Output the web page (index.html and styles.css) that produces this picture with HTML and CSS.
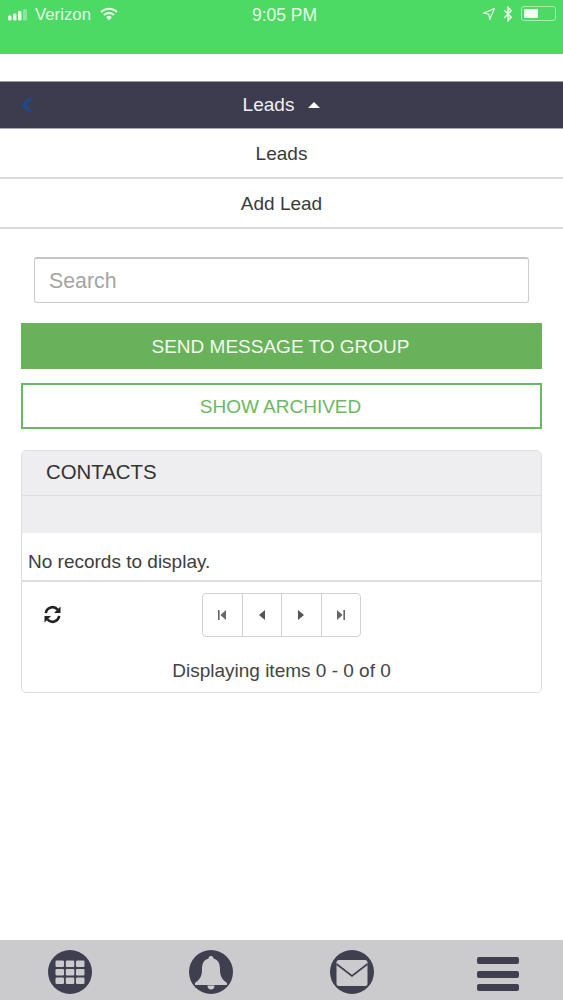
FILE: index.html
```html
<!DOCTYPE html>
<html lang="en">
<head>
  <meta charset="UTF-8">
  <meta name="viewport" content="width=device-width, initial-scale=1.0">
  <title>Leads</title>
  <link rel="stylesheet" href="styles.css">
</head>
<body>

<div class="status-bar">
  <div class="status-left">
    <svg class="signal" width="22" height="12" viewBox="0 0 22 12">
      <rect x="0" y="6.500" width="3.500" height="5" rx="1.200" fill="#eafbe9"/>
      <rect x="5" y="4.500" width="3.500" height="7" rx="1.200" fill="#eafbe9"/>
      <rect x="10" y="2" width="3.500" height="9.500" rx="1.200" fill="#eafbe9"/>
      <rect x="15" y="0" width="4" height="11.500" rx="1.200" fill="#8fe39a"/>
    </svg>
    <span class="carrier">Verizon</span>
    <svg class="wifi" width="18" height="14" viewBox="0 0 18 14">
      <path d="M1 5 A11.500 11.500 0 0 1 17 5" fill="none" stroke="#eafbe9" stroke-width="2"/>
      <path d="M4 8 A7.500 7.500 0 0 1 14 8" fill="none" stroke="#eafbe9" stroke-width="2"/>
      <path d="M6.200 10.200 A4 4 0 0 1 11.800 10.200 L9 13.500 Z" fill="#eafbe9"/>
    </svg>
  </div>
  <div class="status-time">9:05 PM</div>
  <div class="status-right">
    <svg class="arrow" width="12" height="12" viewBox="0 0 12 12">
      <path d="M11.500 .5 L.8 5.200 L5.800 6.200 L6.800 11.200 Z" fill="none" stroke="#dff8e0" stroke-width="1.300"/>
    </svg>
    <svg width="10" height="16" viewBox="0 0 9 15">
      <path d="M1 4 L7.500 10.500 L4.500 13.800 V1.200 L7.500 4.500 L1 11" fill="none" stroke="#eafbe9" stroke-width="1.400"/>
    </svg>
    <div class="battery"><div class="battery-level"></div></div>
  </div>
</div>

<div class="gap-strip"></div>

<div class="nav-bar">
  <svg class="back" width="12" height="16" viewBox="0 0 12 16">
    <path d="M10 1 L3 8 L10 15" fill="none" stroke="#1c4a8c" stroke-width="3.400"/>
  </svg>
  <span>Leads</span>
  <span class="caret"></span>
</div>

<div class="menu-item">Leads</div>
<div class="menu-item">Add Lead</div>

<div class="content">
  <div class="search-wrap">
    <input class="search" type="text" placeholder="Search">
  </div>

  <div class="btn btn-solid">SEND MESSAGE TO GROUP</div>
  <div class="btn btn-outline">SHOW ARCHIVED</div>

  <div class="grid">
    <div class="grid-title">CONTACTS</div>
    <div class="grid-head"></div>
    <div class="grid-empty">No records to display.</div>
    <div class="grid-pager">
      <div class="pager-row">
        <svg class="refresh" width="19" height="19" viewBox="0 0 20 20">
          <path d="M3 8.500 A7 7 0 0 1 15.400 5" fill="none" stroke="#222" stroke-width="2.800"/>
          <path d="M18.400 1.600 V8.400 H11.600 Z" fill="#222"/>
          <path d="M17 11.500 A7 7 0 0 1 4.600 15" fill="none" stroke="#222" stroke-width="2.800"/>
          <path d="M1.600 18.400 V11.600 H8.400 Z" fill="#222"/>
        </svg>
        <div class="pager">
          <div class="page-btn">
            <svg width="10" height="12" viewBox="0 0 10 12"><path d="M1 1 H2.600 V11 H1 Z M9 1 V11 L3.400 6 Z" fill="#666"/></svg>
          </div>
          <div class="page-btn">
            <svg width="8" height="12" viewBox="0 0 8 12"><path d="M7 1 V11 L1 6 Z" fill="#555"/></svg>
          </div>
          <div class="page-btn">
            <svg width="8" height="12" viewBox="0 0 8 12"><path d="M1 1 V11 L7 6 Z" fill="#555"/></svg>
          </div>
          <div class="page-btn">
            <svg width="10" height="12" viewBox="0 0 10 12"><path d="M1 1 V11 L6.600 6 Z M7.400 1 H9 V11 H7.400 Z" fill="#666"/></svg>
          </div>
        </div>
      </div>
      <div class="pager-info">Displaying items 0 - 0 of 0</div>
    </div>
  </div>
</div>

<div class="tab-bar">
  <svg width="44" height="44" viewBox="0 0 44 44">
    <ellipse cx="22" cy="22" rx="22" ry="22" fill="#3f3f50"/>
    <g fill="#cbcbcd">
      <rect x="7.500" y="10.500" width="8.500" height="6.500" rx="1.200"/>
      <rect x="17.800" y="10.500" width="8.500" height="6.500" rx="1.200"/>
      <rect x="28" y="10.500" width="8.500" height="6.500" rx="1.200"/>
      <rect x="7.500" y="19" width="8.500" height="6.500" rx="1.200"/>
      <rect x="17.800" y="19" width="8.500" height="6.500" rx="1.200"/>
      <rect x="28" y="19" width="8.500" height="6.500" rx="1.200"/>
      <rect x="7.500" y="27.500" width="8.500" height="6.500" rx="1.200"/>
      <rect x="17.800" y="27.500" width="8.500" height="6.500" rx="1.200"/>
      <rect x="28" y="27.500" width="8.500" height="6.500" rx="1.200"/>
    </g>
  </svg>
  <svg width="44" height="44" viewBox="0 0 44 44">
    <ellipse cx="22" cy="22" rx="22" ry="22" fill="#3f3f50"/>
    <path d="M22 6 C24 6 24.500 7.500 24.500 8.500 C30 10 31 14.500 31 20 C31 27 34 30 38 33 V35 H6 V33 C10 30 13 27 13 20 C13 14.500 14 10 19.500 8.500 C19.500 7.500 20 6 22 6 Z" fill="#cbcbcd"/>
    <path d="M18.500 35.500 H25.500 C25.500 38 24 39.500 22 39.500 C20 39.500 18.500 38 18.500 35.500 Z" fill="#cbcbcd"/>
  </svg>
  <svg width="44" height="44" viewBox="0 0 44 44">
    <ellipse cx="22" cy="22" rx="22" ry="22" fill="#3f3f50"/>
    <rect x="6.500" y="10" width="31" height="26" rx="2.500" fill="#cbcbcd"/>
    <path d="M6.500 14 L22 26 L37.500 14" fill="none" stroke="#3f3f50" stroke-width="1.600"/>
  </svg>
  <div class="hamburger">
    <div class="bar"></div>
    <div class="bar"></div>
    <div class="bar"></div>
  </div>
</div>

</body>
</html>
```

FILE: styles.css
```css
body {
  margin: 0;
  width: 563px;
  height: 1000px;
  display: flex;
  flex-direction: column;
  overflow: hidden;
  background-color: #fff;
  font-family: "Liberation Sans", Arial, sans-serif;
  color: #333;
}
.status-bar {
  height: 54px;
  background-color: #4cd964;
  display: flex;
  padding: 5px 7px 0 8px;
  box-sizing: border-box;
  color: #e4f9e6;
  font-size: 16.800px;
}
.status-left {
  flex: 1;
  display: flex;
  align-items: flex-start;
  gap: 9px;
}
.status-left .signal {
  margin-top: 4px;
  margin-right: -4px;
}
.status-left .wifi {
  margin-top: 2px;
}
.status-time {
  font-size: 17.500px;
  margin-left: 5px;
}
.status-right {
  flex: 1;
  display: flex;
  justify-content: flex-end;
  align-items: flex-start;
  gap: 8px;
  padding-top: 1px;
}
.status-right .arrow {
  margin-top: 2px;
}
.battery {
  width: 35px;
  height: 15px;
  border: 1px solid #a9ecb2;
  border-radius: 3px;
  padding: 2px;
  box-sizing: border-box;
}
.battery-level {
  width: 14px;
  height: 100%;
  background-color: #f2fdf3;
  border-radius: 1px;
}
.gap-strip {
  height: 27px;
  background-color: #fff;
}
.nav-bar {
  height: 48px;
  background-color: #3c3c4e;
  border-top: 1px solid #9a9aa6;
  border-bottom: 1px solid #a8a8b2;
  box-sizing: border-box;
  display: flex;
  align-items: center;
  justify-content: center;
  position: relative;
  color: #f0f0f3;
  font-size: 19px;
}
.back {
  position: absolute;
  left: 21px;
  top: 15px;
}
.caret {
  width: 0;
  height: 0;
  margin-left: 14px;
  border-left: 6px solid transparent;
  border-right: 6px solid transparent;
  border-bottom: 6px solid #fff;
}
.menu-item {
  height: 50px;
  box-sizing: border-box;
  border-bottom: 2px solid #d9d9dc;
  padding-top: 1px;
  display: flex;
  align-items: center;
  justify-content: center;
  font-size: 19px;
  color: #3a3a3a;
}
.content {
  flex: 1;
  padding: 0 21px;
}
.search-wrap {
  padding: 28px 13px 20px 13px;
}
.search {
  display: block;
  width: 100%;
  height: 46px;
  box-sizing: border-box;
  border: 1px solid #ccc;
  border-top: 2px solid #c4c4c4;
  border-radius: 3px;
  padding: 1px 14px 0;
  font-family: inherit;
  font-size: 21.300px;
  background-color: #fff;
  outline: none;
}
.search::placeholder {
  color: #a4a4a4;
  opacity: 1;
}
.btn {
  height: 46px;
  box-sizing: border-box;
  display: flex;
  align-items: center;
  justify-content: center;
  font-size: 19px;
  padding: 1px 2px 0 0;
}
.btn-solid {
  background-color: #6ab15c;
  color: #f3f9f1;
  margin-bottom: 14px;
}
.btn-outline {
  background-color: #fff;
  border: 2px solid #6ab863;
  color: #6ab863;
  margin-bottom: 21px;
}
.grid {
  border: 1px solid #dedee0;
  border-radius: 5px;
  overflow: hidden;
}
.grid-title {
  height: 45px;
  box-sizing: border-box;
  background-color: #eeedef;
  border-bottom: 1px solid #dedee0;
  padding: 10px 24px 0;
  font-size: 20.400px;
  color: #333;
}
.grid-head {
  height: 37px;
  background-color: #eeedef;
}
.grid-empty {
  height: 49px;
  box-sizing: border-box;
  border-bottom: 2px solid #dedee0;
  padding: 18px 6px 0;
  font-size: 19px;
  color: #3d3d3d;
}
.grid-pager {
  height: 110px;
  box-sizing: border-box;
  padding-top: 11px;
}
.pager-row {
  position: relative;
  display: flex;
  justify-content: center;
}
.refresh {
  position: absolute;
  left: 21px;
  top: 12px;
}
.pager {
  display: flex;
  height: 44px;
  box-sizing: border-box;
  border: 1px solid #d2d2d4;
  border-radius: 4px;
}
.page-btn {
  width: 38.500px;
  display: flex;
  align-items: center;
  justify-content: center;
  border-left: 1px solid #d2d2d4;
}
.page-btn:first-child {
  border-left: none;
}
.pager-info {
  margin-top: 23px;
  text-align: center;
  font-size: 19px;
  color: #444;
}
.tab-bar {
  height: 60px;
  background-color: #cbcbcd;
  display: grid;
  grid-template-columns: 141px 141px 147px 1fr;
  padding: 10px 0 0 48px;
  box-sizing: border-box;
  align-items: start;
}
.tab-bar svg {
  display: block;
}
.hamburger {
  display: flex;
  flex-direction: column;
  gap: 6.500px;
  padding-top: 7px;
}
.bar {
  width: 42px;
  height: 7px;
  border-radius: 2px;
  background-color: #3f3f50;
}
```
